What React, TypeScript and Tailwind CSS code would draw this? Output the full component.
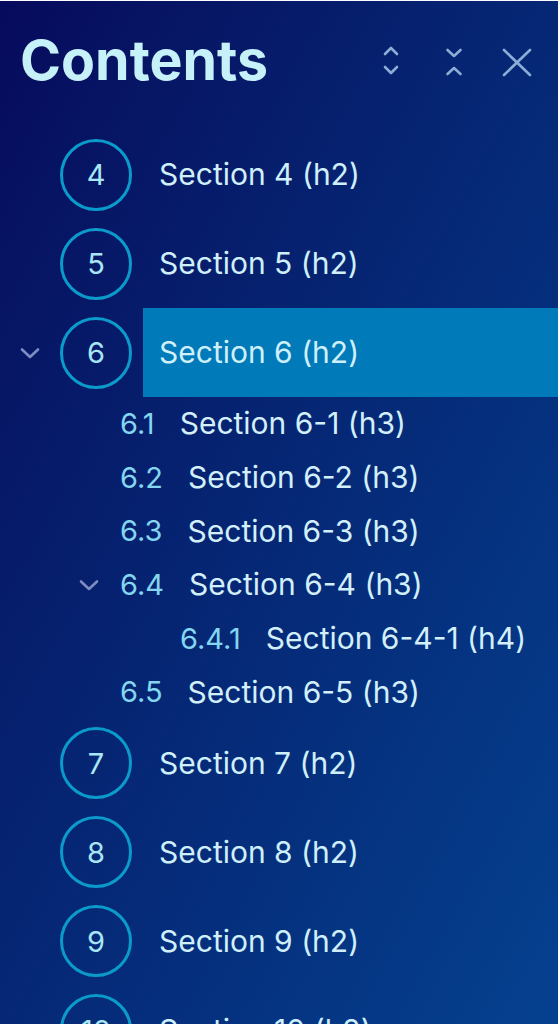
import React from "react";

type Sub = { num: string; label: string; level: 3 | 4; open?: boolean };

const subs: Sub[] = [
  { num: "6.1", label: "Section 6-1 (h3)", level: 3 },
  { num: "6.2", label: "Section 6-2 (h3)", level: 3 },
  { num: "6.3", label: "Section 6-3 (h3)", level: 3 },
  { num: "6.4", label: "Section 6-4 (h3)", level: 3, open: true },
  { num: "6.4.1", label: "Section 6-4-1 (h4)", level: 4 },
  { num: "6.5", label: "Section 6-5 (h3)", level: 3 },
];

function Chevron() {
  return (
    <svg width="22" height="14" viewBox="0 0 22 14" fill="none">
      <path d="M3 3.5 11 11 19 3.5" stroke="#7e8cc2" strokeWidth="2.6" strokeLinecap="round" strokeLinejoin="round" />
    </svg>
  );
}

function H2Row({ n, active, open }: { n: number; active?: boolean; open?: boolean }) {
  return (
    <li className="flex h-[89px] items-center">
      <div className="flex w-[60px] justify-center">{open && <Chevron />}</div>
      <div className="flex h-[72px] w-[72px] shrink-0 items-center justify-center rounded-full border-[3px] border-[#0b9bcb] text-[29px] text-[#a8e6f5]">
        {n}
      </div>
      <div
        className={`ml-[11px] flex h-full flex-1 items-center pl-4 text-[30px] whitespace-nowrap text-[#cfeffa] ${
          active ? "bg-[#007ab8]" : ""
        }`}
      >
        Section {n} (h2)
      </div>
    </li>
  );
}

function SubRow({ s }: { s: Sub }) {
  return (
    <li className="flex h-[53.67px] items-center whitespace-nowrap">
      <div className={`flex shrink-0 justify-end pr-[20px] ${s.level === 4 ? "w-[180px]" : "w-[120px]"}`}>
        {s.open && <Chevron />}
      </div>
      <span className="mr-[25px] text-[29px] text-[#84d6f0]">{s.num}</span>
      <span className="text-[30px] text-[#d2effa]">{s.label}</span>
    </li>
  );
}

export default function App() {
  const stroke = { stroke: "#8badd6", strokeWidth: 2.6, strokeLinecap: "round" as const, strokeLinejoin: "round" as const };
  return (
    <div
      className="h-[1024px] w-[558px] overflow-hidden border-t border-white bg-linear-to-br from-[#070a5c] to-[#05418f]"
      style={{ fontFamily: "Inter, 'Noto Sans', sans-serif" }}
    >
      <header className="flex h-[129px] items-center justify-between pb-[12px] pl-5 pr-[25px]">
        <h1 className="text-[55.5px] leading-none font-bold text-[#c6f1f9]">Contents</h1>
        <div className="flex items-center gap-[31px]">
          <svg width="32" height="34" viewBox="0 0 32 34" fill="none">
            <path d="M10 11 16 5 22 11" {...stroke} />
            <path d="M10 24 16 30 22 24" {...stroke} />
          </svg>
          <svg width="32" height="34" viewBox="0 0 32 34" fill="none">
            <path d="M9.5 7 16 13 22.5 7" {...stroke} />
            <path d="M9.5 31 16 25 22.5 31" {...stroke} />
          </svg>
          <svg width="32" height="34" viewBox="0 0 32 34" fill="none">
            <path d="M3 7 29 32M29 7 3 32" {...stroke} />
          </svg>
        </div>
      </header>
      <ul>
        <H2Row n={4} />
        <H2Row n={5} />
        <H2Row n={6} active open />
        {subs.map((s) => (
          <SubRow key={s.num} s={s} />
        ))}
        <H2Row n={7} />
        <H2Row n={8} />
        <H2Row n={9} />
        <H2Row n={10} />
      </ul>
    </div>
  );
}
